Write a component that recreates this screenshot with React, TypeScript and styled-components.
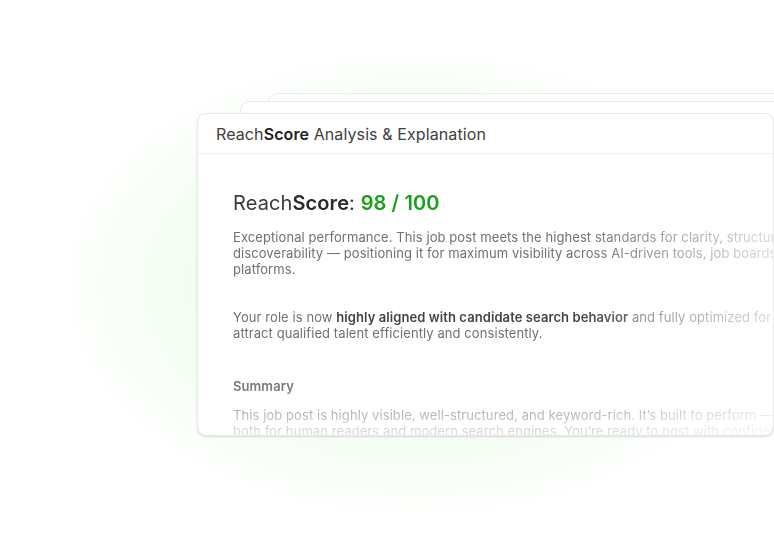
import React from "react";
import styled, { createGlobalStyle } from "styled-components";

const Global = createGlobalStyle`
  html, body { margin: 0; padding: 0; background: #ffffff; }
  body { font-family: Inter, "Noto Sans", "Liberation Sans", sans-serif; -webkit-font-smoothing: antialiased; }
`;

const Stage = styled.div`
  width: 774px;
  height: 552px;
  overflow: hidden;
  background:
    radial-gradient(ellipse 362px 238px at 418px 284px,
      #e8fae5 0%, #effcec 50%, #f7fef6 78%, rgba(255,255,255,0) 100%),
    #ffffff;
`;

const Stack = styled.div`
  display: grid;
  padding: 93px 0 0 197px;
  width: max-content;
`;

const BackCard = styled.div<{ $left: number; $top: number }>`
  grid-area: 1 / 1;
  margin-left: ${(p) => p.$left}px;
  margin-top: ${(p) => p.$top}px;
  width: 620px;
  height: 300px;
  background: #ffffff;
  border: 1px solid #ebedeb;
  border-radius: 9px;
  box-sizing: border-box;
`;

const Card = styled.div`
  grid-area: 1 / 1;
  margin-top: 20px;
  width: 577px;
  height: 323px;
  box-sizing: border-box;
  background: #ffffff;
  border: 1px solid #e8e9e8;
  border-radius: 9px;
  box-shadow: 0 1px 2px rgba(0, 0, 0, 0.14);
  overflow: hidden;
  display: flex;
  flex-direction: column;
`;

const Header = styled.div`
  height: 39px;
  flex: none;
  display: flex;
  align-items: center;
  padding-left: 18px;
  border-bottom: 1px solid #f0f1f0;
  font-size: 16px;
  letter-spacing: 0.1px;
  color: #404040;
  white-space: nowrap;
`;

const Strong = styled.span<{ $color?: string }>`
  font-weight: 600;
  color: ${(p) => p.$color || "#222"};
`;

const Body = styled.div`
  flex: 1;
  min-height: 0;
  overflow: hidden;
  -webkit-mask-image: linear-gradient(to right, #000 0%, #000 66%, rgba(0,0,0,0.25) 100%);
  mask-image: linear-gradient(to right, #000 0%, #000 66%, rgba(0,0,0,0.25) 100%);
`;

const Content = styled.div`
  height: 100%;
  box-sizing: border-box;
  padding: 37px 0 0 35px;
  display: flex;
  flex-direction: column;
  -webkit-mask-image: linear-gradient(to bottom, #000 0%, #000 80%, rgba(0,0,0,0.22) 100%);
  mask-image: linear-gradient(to bottom, #000 0%, #000 80%, rgba(0,0,0,0.22) 100%);
`;

const Title = styled.div`
  font-size: 20px;
  line-height: 24px;
  letter-spacing: 0.1px;
  color: #3a3a3a;
  white-space: nowrap;
`;

const Para = styled.p<{ $gap: number }>`
  margin: ${(p) => p.$gap}px 0 0;
  font-size: 13px;
  line-height: 16px;
  letter-spacing: 0.08px;
  color: #717171;
  white-space: nowrap;
`;

const Bold = styled.span`
  font-weight: 600;
  color: #444;
`;

const SectionLabel = styled.div`
  margin-top: 37px;
  font-size: 13px;
  line-height: 16px;
  letter-spacing: 0.08px;
  font-weight: 600;
  color: #6a6a6a;
`;

export default function App() {
  return (
    <>
      <Global />
      <Stage>
        <Stack>
          <BackCard $left={71} $top={0} />
          <BackCard $left={43} $top={8} />
          <Card>
            <Header>
              Reach<Strong>Score</Strong>&nbsp;Analysis &amp; Explanation
            </Header>
            <Body>
              <Content>
                <Title>
                  Reach<Strong $color="#2a2a2a">Score</Strong>: <Strong $color="#1b9e1b">98 / 100</Strong>
                </Title>
                <Para $gap={14}>
                  Exceptional performance. This job post meets the highest standards for clarity, structure, and
                  <br />
                  discoverability — positioning it for maximum visibility across AI-driven tools, job boards, and search
                  <br />
                  platforms.
                </Para>
                <Para $gap={32}>
                  Your role is now <Bold>highly aligned with candidate search behavior</Bold> and fully optimized for visibility to
                  <br />
                  attract qualified talent efficiently and consistently.
                </Para>
                <SectionLabel>Summary</SectionLabel>
                <Para $gap={13}>
                  This job post is highly visible, well-structured, and keyword-rich. It’s built to perform — consistently,
                  <br />
                  both for human readers and modern search engines. You’re ready to post with confidence.
                </Para>
              </Content>
            </Body>
          </Card>
        </Stack>
      </Stage>
    </>
  );
}
